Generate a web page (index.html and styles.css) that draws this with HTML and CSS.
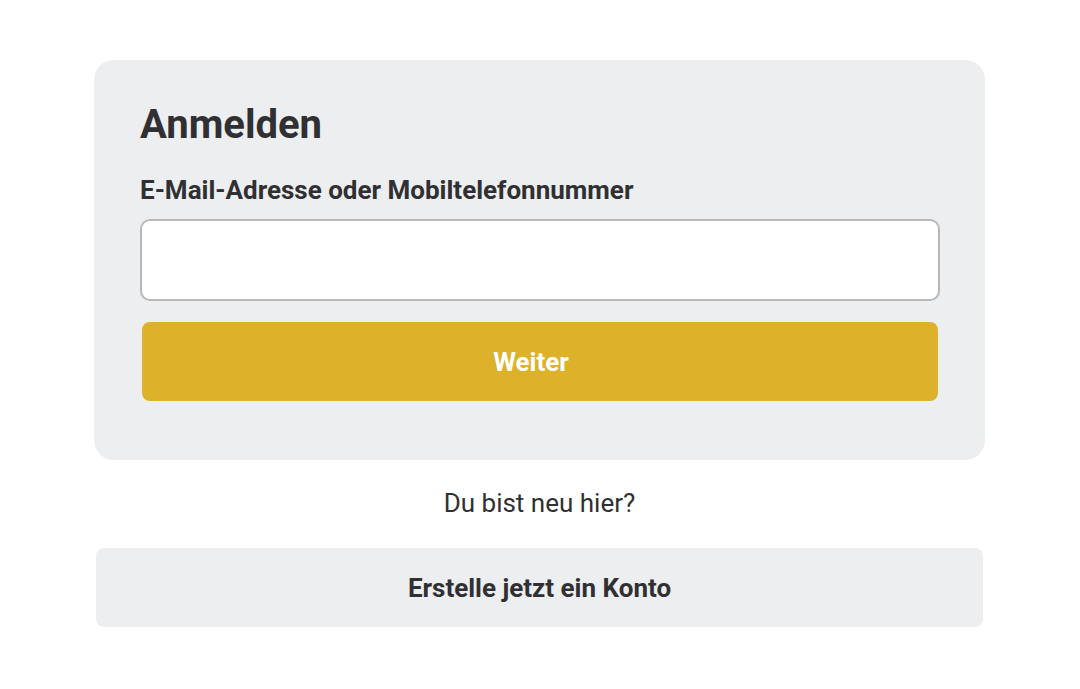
FILE: index.html
```html
<!DOCTYPE html>
<html lang="de">
<head>
<meta charset="utf-8">
<title>Anmelden</title>
<link rel="stylesheet" href="styles.css">
</head>
<body>
<main class="page">
  <section class="card">
    <h1 class="title">Anmelden</h1>
    <label class="label" for="login">E-Mail-Adresse oder Mobiltelefonnummer</label>
    <input class="input" id="login" type="text">
    <button class="btn-primary" type="button">Weiter</button>
  </section>
  <p class="new">Du bist neu hier?</p>
  <button class="btn-secondary" type="button">Erstelle jetzt ein Konto</button>
</main>
</body>
</html>
```

FILE: styles.css
```css
* { box-sizing: border-box; }
html, body { margin: 0; padding: 0; background: #ffffff; }
body {
  font-family: Roboto, "Liberation Sans", Arial, sans-serif;
  color: #303033;
}
.page {
  width: 891px;
  margin: 60px 0 0 94px;
  display: flex;
  flex-direction: column;
}
.card {
  background: #eceeef;
  border-radius: 20px;
  padding: 41px 45px 59px 46px;
  display: flex;
  flex-direction: column;
}
.title {
  margin: 0;
  font-size: 40px;
  line-height: 48px;
  font-weight: 700;
}
.label {
  margin-top: 26px;
  font-size: 26px;
  line-height: 30px;
  font-weight: 700;
}
.input {
  margin-top: 14px;
  height: 82px;
  width: 800px;
  border: 2px solid #b9b9b9;
  border-radius: 10px;
  background: #fff;
  font: inherit;
  font-size: 22px;
  padding: 0 16px;
  outline: none;
}
.btn-primary {
  margin: 21px 2px 0 2px;
  height: 79px;
  width: 796px;
  border: none;
  border-radius: 8px;
  padding: 0 18px 0 0;
  background: #ddb22a;
  color: #ffffff;
  font-family: inherit;
  font-size: 26px;
  font-weight: 700;
  cursor: pointer;
}
.new {
  margin: 28px 0 0;
  text-align: center;
  font-size: 26px;
  line-height: 30px;
  font-weight: 400;
}
.btn-secondary {
  margin: 30px 2px 0 2px;
  height: 79px;
  border: none;
  border-radius: 8px;
  background: #eceeef;
  color: #303033;
  font-family: inherit;
  font-size: 26px;
  font-weight: 700;
  cursor: pointer;
}
```
